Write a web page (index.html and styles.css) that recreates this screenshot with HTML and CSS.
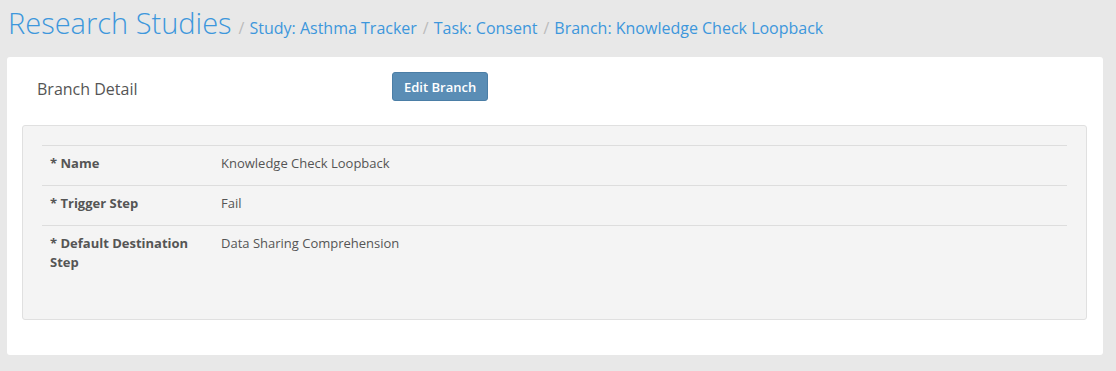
FILE: index.html
```html
<!DOCTYPE html>
<html lang="en">
<head>
  <meta charset="UTF-8">
  <title>Branch Detail</title>
  <link rel="stylesheet" href="styles.css">
</head>
<body>
  <div class="page-head">
    <h1>Research Studies</h1>
    <ol class="crumbs">
      <li><a href="#">Study: Asthma Tracker</a></li>
      <li><a href="#">Task: Consent</a></li>
      <li><a href="#">Branch: Knowledge Check Loopback</a></li>
    </ol>
  </div>

  <div class="panel">
    <div class="panel-head">
      <h2>Branch Detail</h2>
      <button class="btn">Edit Branch</button>
    </div>

    <div class="well">
      <table class="detail">
        <tr>
          <th>* Name</th>
          <td>Knowledge Check Loopback</td>
        </tr>
        <tr>
          <th>* Trigger Step</th>
          <td>Fail</td>
        </tr>
        <tr>
          <th>* Default Destination Step</th>
          <td>Data Sharing Comprehension</td>
        </tr>
      </table>
    </div>
  </div>
</body>
</html>
```

FILE: styles.css
```css
body {margin: 0; padding: 0 13px 0 7px; background: #e8e8e8; font-family: "Open Sans", "Liberation Sans", sans-serif; color: #555; font-size: 13px;}
a {color: #3d97dc; text-decoration: none;}

.page-head {display: flex; align-items: baseline; height: 57px; padding-left: 1px;}
.page-head h1 {margin: 0; padding-top: 0; font-size: 29px; font-weight: 300; color: #3d97dc; line-height: 46px;}
.crumbs {display: flex; list-style: none; margin: 0 0 0 7px; padding: 0; font-size: 16px;}
.crumbs li::before {content: "/"; color: #bbb; padding: 0 5px 0 0;}
.crumbs li + li {margin-left: 6px;}

.panel {background: #fff; border-radius: 3px; padding: 15px 16px 15px 15px;}
.panel-head {display: flex; align-items: center; height: 29px; margin-bottom: 24px;}
.panel-head h2 {margin: 0; width: 355px; padding: 4px 0 0 15px; font-size: 16px; font-weight: 400; color: #555;}
.btn {font-family: inherit; font-size: 13px; font-weight: 600; color: #fff; background: #5a8db5; border: 1px solid #4b7ea6; border-radius: 3px; height: 29px; padding: 0 11px;}

.well {background: #f4f4f4; border: 1px solid #e0e0e0; border-radius: 3px; padding: 19px; margin-bottom: 20px;}
.detail {width: 100%; border-collapse: collapse; margin-bottom: 20px;}
.detail th, .detail td {border-top: 1px solid #ddd; padding: 8px 8px 12px; line-height: 19px; vertical-align: top; text-align: left;}
.detail th {width: 155px; font-weight: 700;}
.detail tr:last-child th, .detail tr:last-child td {padding-bottom: 8px; height: 38px;}
```
